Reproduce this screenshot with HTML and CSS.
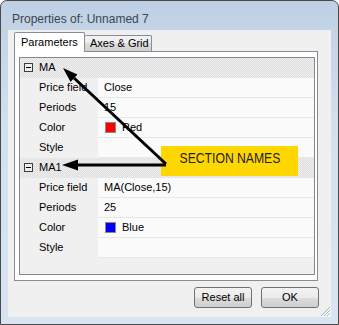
FILE: index.html
```html
<!DOCTYPE html>
<html>
<head>
<meta charset="utf-8">
<link rel="stylesheet" href="styles.css">
</head>
<body>
<div class="window">
  <div class="titlebar">Properties of: Unnamed 7</div>
  <div class="client">
    <div class="tabs">
      <div class="tab active">Parameters</div>
      <div class="tab">Axes &amp; Grid</div>
    </div>
    <div class="panel">
      <div class="grid">
        <div class="row cat"><span class="toggle"></span><span class="cat-name">MA</span></div>
        <div class="row"><span class="label">Price field</span><span class="value">Close</span></div>
        <div class="row"><span class="label">Periods</span><span class="value">15</span></div>
        <div class="row"><span class="label">Color</span><span class="value"><i class="swatch red"></i>Red</span></div>
        <div class="row"><span class="label">Style</span><span class="value"></span></div>
        <div class="row cat"><span class="toggle"></span><span class="cat-name">MA1</span></div>
        <div class="row"><span class="label">Price field</span><span class="value">MA(Close,15)</span></div>
        <div class="row"><span class="label">Periods</span><span class="value">25</span></div>
        <div class="row"><span class="label">Color</span><span class="value"><i class="swatch blue"></i>Blue</span></div>
        <div class="row"><span class="label">Style</span><span class="value"></span></div>
        <div class="filler"></div>
      </div>
    </div>
    <div class="buttons">
      <button class="btn">Reset all</button>
      <button class="btn">OK</button>
    </div>
    <svg class="grip" width="12" height="12" viewBox="0 0 12 12">
      <path d="M11 2 L2 11 M11 5 L5 11 M11 8 L8 11" stroke="#a9b3be" stroke-width="1"/>
      <path d="M12 3 L3 12 M12 6 L6 12 M12 9 L9 12" stroke="#ffffff" stroke-width="1"/>
    </svg>
  </div>
  <div class="callout"><span>SECTION NAMES</span></div>
  <svg class="arrows" width="339" height="325" viewBox="0 0 339 325">
    <line x1="166" y1="164" x2="74" y2="78" stroke="#000" stroke-width="3"/>
    <polygon points="63,68 77.4,74.6 70.6,81.9" fill="#000"/>
    <line x1="166" y1="165" x2="76" y2="165" stroke="#000" stroke-width="3"/>
    <polygon points="62,165 78,159.5 78,170.5" fill="#000"/>
  </svg>
</div>
</body>
</html>
```

FILE: styles.css
```css
html, body {
  margin: 0;
  padding: 0;
  background: #ffffff;
}

.window {
  position: relative;
  width: 339px;
  height: 325px;
  box-sizing: border-box;
  border: 1px solid #4a4a4a;
  border-radius: 7px 7px 0 0;
  background: linear-gradient(#bfd0e4, #d3e1ef 40%, #d8e4f1);
  padding: 0 7px 7px 7px;
  display: flex;
  flex-direction: column;
  font-family: "Liberation Sans", Arial, sans-serif;
}

.titlebar {
  height: 29px;
  box-sizing: border-box;
  padding: 8px 0 0 4px;
  line-height: 20px;
  font-size: 12px;
  color: #3a4552;
}

.client {
  position: relative;
  flex: 1;
  background: #f0f0f0;
  display: flex;
  flex-direction: column;
}

.tabs {
  display: flex;
  align-items: flex-end;
  margin-top: 2px;
  height: 19px;
  padding-left: 6px;
  position: relative;
  z-index: 1;
}

.tab {
  font-size: 11px;
  color: #000;
  box-sizing: border-box;
  height: 16px;
  line-height: 15px;
  padding: 0 2px 0 5px;
  border: 1px solid #898c95;
  border-left: none;
  border-bottom: none;
  border-radius: 2px 2px 0 0;
  background: linear-gradient(#f3f3f3, #ebebeb 50%, #dddddd 50%, #cfcfcf);
}

.tab.active {
  height: 20px;
  margin-bottom: -1px;
  line-height: 18px;
  width: 71px;
  padding: 0 0 0 6px;
  border-left: 1px solid #898c95;
  background: #ffffff;
}

.panel {
  margin-left: 6px;
  width: 304px;
  height: 230px;
  box-sizing: border-box;
  border: 1px solid #898c95;
  background: #ffffff;
  padding: 5px 2px 5px 4px;
}

.grid {
  box-sizing: border-box;
  width: 296px;
  height: 218px;
  border: 1px solid #828790;
  background: #f0f0f0;
  display: flex;
  flex-direction: column;
  font-size: 11px;
  color: #000;
}

.row {
  display: flex;
  height: 20px;
  flex: none;
}

.label {
  width: 78px;
  box-sizing: border-box;
  padding-left: 19px;
  line-height: 19px;
  background: #f0f0f0;
  white-space: nowrap;
  overflow: hidden;
}

.value {
  flex: 1;
  box-sizing: border-box;
  padding-left: 6px;
  line-height: 19px;
  border-bottom: 1px solid #e8e8e8;
  background: repeating-conic-gradient(#ffffff 0 25%, #f6f6f6 0 50%) 0 0 / 2px 2px;
  display: flex;
  align-items: center;
}

.row.cat {
  align-items: flex-start;
  background: repeating-conic-gradient(#dedede 0 25%, #efefef 0 50%) 0 0 / 2px 2px;
}

.toggle {
  position: relative;
  width: 9px;
  height: 9px;
  box-sizing: border-box;
  margin: 5px 6px 0 4px;
  border: 1px solid #3c3c3c;
  background: #eeeeee;
}

.toggle::after {
  content: "";
  position: absolute;
  left: 1px;
  top: 3px;
  width: 5px;
  height: 1px;
  background: #000;
}

.cat-name {
  line-height: 19px;
}

.swatch {
  display: inline-block;
  width: 11px;
  height: 11px;
  box-sizing: border-box;
  border: 1px solid #8a8a8a;
  margin: 0 6px 0 1px;
}

.swatch.red { background: #ff0000; }
.swatch.blue { background: #0000ff; }

.filler {
  flex: 1;
  background: #f0f0f0;
}

.buttons {
  display: flex;
  justify-content: flex-end;
  gap: 9px;
  padding: 6px 12px 0 0;
}

.btn {
  width: 58px;
  height: 21px;
  margin: 0;
  padding: 0;
  box-sizing: border-box;
  border: 1px solid #707070;
  border-radius: 3px;
  background: linear-gradient(#f2f2f2, #ebebeb 50%, #dddddd 50%, #cfcfcf);
  font-family: "Liberation Sans", Arial, sans-serif;
  font-size: 11px;
  color: #000;
  line-height: 19px;
}

.grip {
  position: absolute;
  right: 0;
  bottom: 0;
}

.callout {
  position: absolute;
  left: 160px;
  top: 145px;
  width: 137px;
  height: 30px;
  background: #ffd700;
  display: flex;
  justify-content: center;
  align-items: center;
  padding-bottom: 6px;
  box-sizing: border-box;
  font-family: "Liberation Sans", Arial, sans-serif;
  font-size: 14px;
  color: #222222;
}

.callout span {
  display: inline-block;
  transform: scaleX(0.87);
  white-space: nowrap;
}

.arrows {
  position: absolute;
  left: -1px;
  top: -1px;
  pointer-events: none;
}
```
